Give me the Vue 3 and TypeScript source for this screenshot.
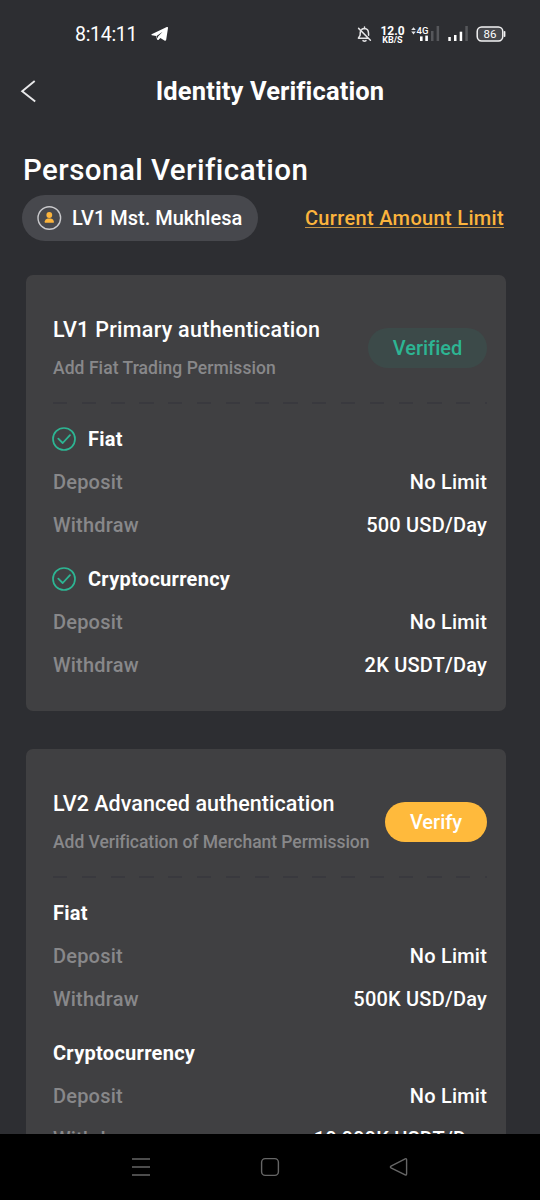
<script setup lang="ts">
interface Group {
  name: string
  done: boolean
  rows: { label: string; value: string }[]
}
interface Level {
  title: string
  note: string
  action: string
  kind: 'verified' | 'verify'
  groups: Group[]
}

const makeGroup = (name: string, done: boolean, withdraw: string): Group => ({
  name,
  done,
  rows: [
    { label: 'Deposit', value: 'No Limit' },
    { label: 'Withdraw', value: withdraw },
  ],
})

const levels: Level[] = [
  {
    title: 'LV1 Primary authentication',
    note: 'Add Fiat Trading Permission',
    action: 'Verified',
    kind: 'verified',
    groups: [makeGroup('Fiat', true, '500 USD/Day'), makeGroup('Cryptocurrency', true, '2K USDT/Day')],
  },
  {
    title: 'LV2 Advanced authentication',
    note: 'Add Verification of Merchant Permission',
    action: 'Verify',
    kind: 'verify',
    groups: [makeGroup('Fiat', false, '500K USD/Day'), makeGroup('Cryptocurrency', false, '10,000K USDT/Day')],
  },
]
</script>

<template>
  <div class="screen">
    <header class="status">
      <span class="clock">8:14:11</span>
      <svg class="plane" width="18" height="16" viewBox="0 0 18 16">
        <path d="M0.6 8.3 L15.8 1.1 Q17.2 0.6 17 2 L15.2 13.8 Q14.8 15.4 13.4 14.6 L9.4 12 L7.4 13.9 Q6.4 14.5 6 13.3 L5.2 10 L0.8 9.3 Q0 8.8 0.6 8.3 Z" fill="#fff" />
        <path d="M5.6 9.9 L11.6 5.8 L7.1 10.6 L6.6 12.4 Z" fill="#2d2e32" />
      </svg>
      <span class="grow"></span>
      <svg class="bell" width="15" height="17" viewBox="0 0 15 17" fill="none" stroke="#e4e4e6" stroke-width="1.5" stroke-linecap="round" stroke-linejoin="round">
        <path d="M4.8 3.4 Q5.8 2.4 7.5 2.4 Q11.4 2.6 11.5 7 L11.6 9.2 M3.3 5.8 L3.1 9.4 L1.4 12.2 H11.2 M7.5 1 V2.2 M6 14.6 Q7.5 15.8 9 14.6 M1.6 2.4 L13.4 14.2" />
      </svg>
      <span class="speed"><b>12.0</b><b class="unit">KB/S</b></span>
      <svg class="net" width="29" height="20" viewBox="0 0 29 20">
        <path d="M0.2 6 L2.5 3.2 L4.8 6 Z M0.2 7.6 L2.5 10.4 L4.8 7.6 Z" fill="#e4e4e6" />
        <text x="5.6" y="10.3" class="gen">4G</text>
        <rect x="9" y="12.4" width="2.6" height="4.6" fill="#fff" />
        <rect x="14.3" y="11.6" width="2.6" height="5.4" fill="#fff" />
        <rect x="20" y="7" width="2.5" height="10" fill="#56575b" />
        <rect x="25.6" y="2" width="2.5" height="15" fill="#56575b" />
      </svg>
      <svg class="bars" width="20" height="20" viewBox="0 0 20 20">
        <rect x="0.3" y="13" width="2.5" height="4" fill="#fff" />
        <rect x="6" y="11" width="2.5" height="6" fill="#fff" />
        <rect x="11.7" y="7.7" width="2.5" height="9.3" fill="#fff" />
        <rect x="17.3" y="2" width="2.5" height="15" fill="#56575b" />
      </svg>
      <svg class="battery" width="30" height="16" viewBox="0 0 30 16">
        <rect x="1.2" y="1" width="25.6" height="14" rx="4.4" fill="#47484c" stroke="#f2f2f3" stroke-width="1.5" />
        <path d="M28.6 5.8 V10.2" stroke="#f2f2f3" stroke-width="1.6" stroke-linecap="round" />
        <text x="14" y="12" text-anchor="middle" class="level">86</text>
      </svg>
    </header>

    <nav class="titlebar">
      <svg class="back" width="17" height="24" viewBox="0 0 17 24" fill="none" stroke="#e8e8ea" stroke-width="1.9">
        <path d="M14.7 1 L2.2 11.2 L15.2 21.4" />
      </svg>
      <h1><span>Identity Verification</span></h1>
    </nav>

    <main class="content">
      <h2><span>Personal Verification</span></h2>
      <div class="account">
        <div class="chip">
          <svg width="25" height="25" viewBox="0 0 25 25">
            <circle cx="12.3" cy="12" r="11.3" fill="none" stroke="#c9c9cc" stroke-width="1.4" />
            <circle cx="12.3" cy="9" r="2.9" fill="#fcb43c" />
            <path d="M7.8 16.7 V15.2 Q8 12.8 10.6 12.4 H14 Q16.6 12.8 16.8 15.2 V16.7 Z" fill="#fcb43c" />
          </svg>
          <span>LV1 Mst. Mukhlesa</span>
        </div>
        <a class="limit">Current Amount Limit</a>
      </div>

      <section v-for="level in levels" :key="level.title" class="card">
        <div class="head" :class="`head-${level.kind}`">
          <div>
            <div class="title"><span>{{ level.title }}</span></div>
            <div class="note"><span>{{ level.note }}</span></div>
          </div>
          <div class="pill" :class="level.kind"><span>{{ level.action }}</span></div>
        </div>
        <div class="divider"></div>
        <div v-for="group in level.groups" :key="group.name" class="group">
          <div class="name">
            <svg v-if="group.done" class="tick" width="24" height="24" viewBox="0 0 24 24" fill="none" stroke="#2db593">
              <circle cx="12" cy="12" r="11" stroke-width="1.7" />
              <path d="M6.3 11.6 L10.7 16 L18 8.2" stroke-width="1.8" stroke-linecap="round" stroke-linejoin="round" />
            </svg>
            <span>{{ group.name }}</span>
          </div>
          <div v-for="row in group.rows" :key="row.label" class="row">
            <span class="label">{{ row.label }}</span>
            <span class="value">{{ row.value }}</span>
          </div>
        </div>
      </section>
    </main>

    <footer class="navbar">
      <svg width="20" height="20" viewBox="0 0 20 20" stroke="#666" stroke-width="1.5">
        <path d="M1 1.9 H19 M1 10 H19 M1 18.1 H19" />
      </svg>
      <svg width="20" height="20" viewBox="0 0 20 20" fill="none" stroke="#666" stroke-width="1.4">
        <rect x="1.6" y="1.6" width="16.8" height="16.8" rx="3.6" />
      </svg>
      <svg width="20" height="20" viewBox="0 0 20 20" fill="none" stroke="#666" stroke-width="1.4" stroke-linejoin="round">
        <path d="M2 9.2 L16.2 1.8 Q17.6 1.2 17.6 2.8 V16.8 Q17.6 18.4 16.2 17.8 L2 10.8 Q0.8 10 2 9.2 Z" />
      </svg>
    </footer>
  </div>
</template>

<style>
body {
  background: #2d2e32;
}
</style>

<style scoped>
.screen {
  width: 540px;
  height: 1200px;
  display: flex;
  flex-direction: column;
  overflow: hidden;
  background: #2d2e32;
  color: #fff;
  font-family: Roboto, "Liberation Sans", sans-serif;
  font-variant-ligatures: none;
}
.status {
  height: 68px;
  flex: none;
  display: flex;
  align-items: center;
  padding: 0 34px 0 75px;
  box-sizing: border-box;
}
.clock {
  font-size: 19.5px;
  letter-spacing: -0.3px;
  width: 76px;
}
.grow {
  flex: 1;
}
.bell {
  margin-right: 8px;
}
.speed {
  width: 25px;
  display: flex;
  flex-direction: column;
  align-items: center;
  font-size: 12px;
  line-height: 12px;
  margin-right: 6px;
}
.unit {
  font-size: 9px;
  line-height: 7px;
}
.net {
  margin-right: 8px;
}
.gen {
  font: 500 9.5px Roboto, sans-serif;
  fill: #fff;
}
.bars {
  margin-right: 8px;
}
.level {
  font: 400 11.5px Roboto, sans-serif;
  fill: #fff;
}
.titlebar {
  height: 48px;
  flex: none;
  display: flex;
  align-items: center;
  padding-left: 20px;
}
h1 {
  margin: 0;
  flex: 1;
  text-align: center;
  padding-right: 37px;
  font-size: 25.5px;
  font-weight: 700;
  line-height: 46px;
  height: 48px;
  letter-spacing: 0.12px;
}
.content {
  flex: 1;
  min-height: 0;
  overflow: hidden;
  padding: 33px 34px 0 22px;
}
h2 {
  margin: 0 0 0 1px;
  font-size: 29.5px;
  font-weight: 500;
  line-height: 42px;
  height: 46px;
  letter-spacing: 0.45px;
}
.account {
  display: flex;
  align-items: center;
  justify-content: space-between;
  height: 46px;
  padding-right: 2px;
  margin-bottom: 34px;
}
.chip {
  display: flex;
  align-items: center;
  gap: 10px;
  height: 46px;
  width: 236px;
  box-sizing: border-box;
  padding-left: 15px;
  border-radius: 23px;
  background: #47484d;
  font-size: 20px;
  font-weight: 500;
  white-space: nowrap;
}
.limit {
  color: #fcb43c;
  font-size: 20px;
  font-weight: 500;
  letter-spacing: 0.33px;
  line-height: 18px;
  border-bottom: 1.4px solid #c29246;
}
.card {
  height: 436px;
  margin: 0 0 38px 4px;
  padding: 34px 19px 0 27px;
  box-sizing: border-box;
  border-radius: 7px;
  background: #404042;
}
.head {
  display: flex;
  justify-content: space-between;
  align-items: center;
  height: 78px;
  margin-bottom: 15px;
  white-space: nowrap;
}
.title {
  padding-top: 2px;
  font-size: 21.5px;
  font-weight: 500;
  line-height: 39px;
  letter-spacing: 0.27px;
}
.note {
  font-size: 17.5px;
  font-weight: 500;
  line-height: 39px;
  letter-spacing: 0.06px;
  color: #88888a;
}
.head-verify .title {
  letter-spacing: 0.05px;
}
.head-verify .note {
  letter-spacing: -0.04px;
}
.pill {
  height: 40px;
  border-radius: 20px;
  display: flex;
  align-items: center;
  justify-content: center;
  font-size: 20px;
  font-weight: 500;
}
.verified {
  width: 119px;
  color: #2db593;
  background: #3c4a49;
}
.verify {
  width: 102px;
  background: #ffba3c;
}
.divider {
  height: 2px;
  margin-bottom: 17px;
  background: repeating-linear-gradient(90deg, #39393e 0 14.3px, transparent 14.3px 28.8px);
}
.group {
  margin-bottom: 14.5px;
}
.name {
  display: flex;
  align-items: center;
  gap: 12px;
  height: 36px;
  margin-bottom: 3.5px;
  font-size: 20px;
  font-weight: 700;
  letter-spacing: 0.28px;
}
.tick {
  margin-left: -1px;
}
.row {
  display: flex;
  align-items: center;
  justify-content: space-between;
  height: 43px;
  font-size: 20px;
  font-weight: 500;
  letter-spacing: 0.2px;
}
.label {
  color: #88888a;
}
.navbar {
  height: 66px;
  flex: none;
  display: flex;
  align-items: center;
  justify-content: space-between;
  padding: 0 131px;
  background: #000;
}
</style>
